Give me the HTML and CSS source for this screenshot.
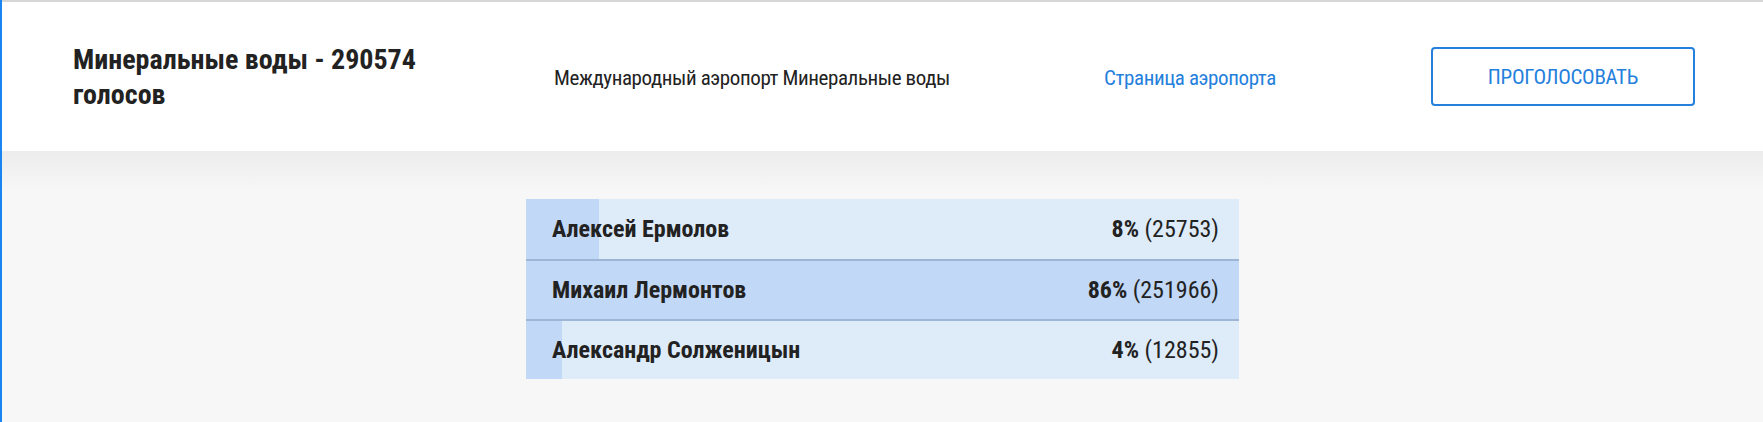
FILE: index.html
```html
<!DOCTYPE html>
<html lang="ru">
<head>
  <meta charset="UTF-8">
  <title>Минеральные воды | Голосование</title>
  <meta name="viewport" content="width=device-width, initial-scale=1.0"/>
  <link rel="stylesheet" href="styles.css">
</head>
<body>
  <div class="airport">
    <h2 class="airport-title">Минеральные воды - 290574 голосов</h2>
    <div class="airport-desc">Международный аэропорт Минеральные воды</div>
    <a class="airport-link" href="#">Страница аэропорта</a>
    <button class="vote-btn" type="button">ПРОГОЛОСОВАТЬ</button>
  </div>
  <div class="results">
    <div class="result-list">
      <div class="result-row">
        <div class="result-fill" style="width: 10.22%"></div>
        <span class="result-name">Алексей Ермолов</span>
        <span class="result-count"><b>8%</b> (25753)</span>
      </div>
      <div class="result-row">
        <div class="result-fill" style="width: 100%"></div>
        <span class="result-name">Михаил Лермонтов</span>
        <span class="result-count"><b>86%</b> (251966)</span>
      </div>
      <div class="result-row">
        <div class="result-fill" style="width: 5.1%"></div>
        <span class="result-name">Александр Солженицын</span>
        <span class="result-count"><b>4%</b> (12855)</span>
      </div>
    </div>
  </div>
</body>
</html>
```

FILE: styles.css
```css
body {
  margin: 0;
  padding: 0;
  min-height: 100vh;
  background: #f7f7f7;
  border-left: 2px solid #1a84f0;
  font-family: 'Roboto Condensed', 'DejaVu Sans', sans-serif;
  font-stretch: condensed;
  color: #222;
  box-sizing: border-box;
}
/* Airport header */
.airport {
  display: grid;
  grid-template-columns: 481px 550px 1fr 264px;
  align-items: center;
  height: 149px;
  padding: 0 68px 0 71px;
  background: #fff;
  border-top: 2px solid #d6d6d6;
}
.airport-title {
  margin: 0;
  max-width: 420px;
  font-size: 28px;
  line-height: 35px;
  font-weight: 700;
  color: #222;
}
.airport-desc {
  font-size: 21px;
  letter-spacing: -0.4px;
  white-space: nowrap;
  padding-top: 2px;
}
.airport-link {
  font-size: 21px;
  letter-spacing: -0.4px;
  color: #2480dc;
  text-decoration: none;
  white-space: nowrap;
  padding-top: 2px;
}
.vote-btn {
  height: 59px;
  background: #fff;
  border: 2px solid #2480dc;
  border-radius: 4px;
  color: #2480dc;
  font-family: inherit;
  font-stretch: inherit;
  font-size: 21px;
  letter-spacing: -0.3px;
  cursor: pointer;
}
/* Results */
.results {
  background: linear-gradient(#ececec 0, #f7f7f7 40px);
  padding: 48px 0 44px 0;
}
.result-list {
  width: 713px;
  margin: 0 auto;
  background: #deebf9;
}
.result-row {
  position: relative;
  display: flex;
  justify-content: space-between;
  align-items: center;
  height: 58px;
  padding: 0 20px 0 26px;
  border-top: 2px solid #9db6d6;
}
.result-row:first-child {
  border-top: none;
  height: 60px;
}
.result-fill {
  position: absolute;
  top: 0; left: 0; bottom: 0;
  background: #c1d8f6;
}
.result-name, .result-count {
  position: relative;
  font-size: 24px;
}
.result-name {
  font-weight: 700;
}
.result-count b {
  font-weight: 700;
}
```
